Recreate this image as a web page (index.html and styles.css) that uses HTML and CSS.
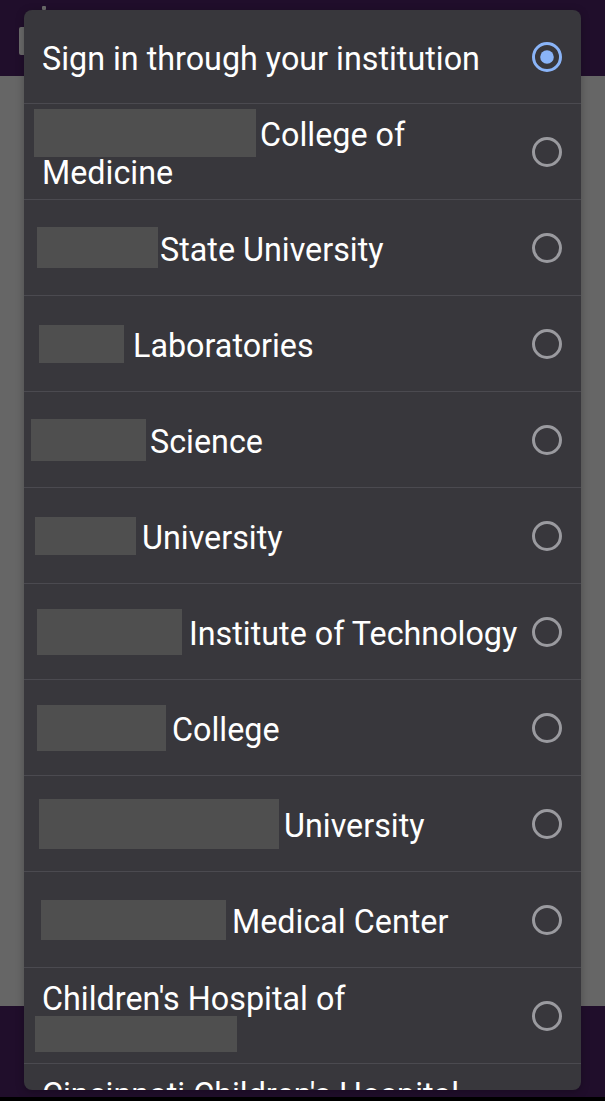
FILE: index.html
```html
<!DOCTYPE html>
<html lang="en">
<head>
<meta charset="utf-8">
<title>Sign in through your institution</title>
<link rel="stylesheet" href="styles.css">
</head>
<body>
<div class="page">
  <header class="topbar"></header>
  <main class="main"></main>
  <footer class="bottombar"></footer>
  <div class="strip"></div>

  <svg class="peek-icon" width="32" height="54" viewBox="0 0 32 54" aria-hidden="true">
    <rect x="2" y="22" width="10" height="28" rx="2" fill="#6a6a6a"/>
    <rect x="25" y="1" width="4" height="4" rx="1" fill="#6a6a6a"/>
  </svg>

  <div class="dialog" role="listbox">
    <div class="row first">
      <div class="label">Sign in through your institution</div>
      <svg class="radio" viewBox="0 0 30 30"><circle cx="15" cy="15" r="13.5" class="ring on"/><circle cx="15" cy="15" r="6.8" class="dot"/></svg>
    </div>
    <div class="row">
      <div class="label"><span class="redact r2"></span>College of<br>Medicine</div>
      <svg class="radio" viewBox="0 0 30 30"><circle cx="15" cy="15" r="13.5" class="ring"/></svg>
    </div>
    <div class="row">
      <div class="label"><span class="redact r3"></span>State University</div>
      <svg class="radio" viewBox="0 0 30 30"><circle cx="15" cy="15" r="13.5" class="ring"/></svg>
    </div>
    <div class="row">
      <div class="label"><span class="redact r4"></span>Laboratories</div>
      <svg class="radio" viewBox="0 0 30 30"><circle cx="15" cy="15" r="13.5" class="ring"/></svg>
    </div>
    <div class="row">
      <div class="label"><span class="redact r5"></span>Science</div>
      <svg class="radio" viewBox="0 0 30 30"><circle cx="15" cy="15" r="13.5" class="ring"/></svg>
    </div>
    <div class="row">
      <div class="label"><span class="redact r6"></span>University</div>
      <svg class="radio" viewBox="0 0 30 30"><circle cx="15" cy="15" r="13.5" class="ring"/></svg>
    </div>
    <div class="row">
      <div class="label"><span class="redact r7"></span>Institute of Technology</div>
      <svg class="radio" viewBox="0 0 30 30"><circle cx="15" cy="15" r="13.5" class="ring"/></svg>
    </div>
    <div class="row">
      <div class="label"><span class="redact r8"></span>College</div>
      <svg class="radio" viewBox="0 0 30 30"><circle cx="15" cy="15" r="13.5" class="ring"/></svg>
    </div>
    <div class="row">
      <div class="label"><span class="redact r9"></span>University</div>
      <svg class="radio" viewBox="0 0 30 30"><circle cx="15" cy="15" r="13.5" class="ring"/></svg>
    </div>
    <div class="row">
      <div class="label"><span class="redact r10"></span>Medical Center</div>
      <svg class="radio" viewBox="0 0 30 30"><circle cx="15" cy="15" r="13.5" class="ring"/></svg>
    </div>
    <div class="row">
      <div class="label">Children's Hospital of<br><span class="redact r11"></span></div>
      <svg class="radio" viewBox="0 0 30 30"><circle cx="15" cy="15" r="13.5" class="ring"/></svg>
    </div>
    <div class="row">
      <div class="label">Cincinnati Children's Hospital<br>Medical Center</div>
      <svg class="radio" viewBox="0 0 30 30"><circle cx="15" cy="15" r="13.5" class="ring"/></svg>
    </div>
  </div>
</div>
</body>
</html>
```

FILE: styles.css
```css
* { box-sizing: border-box; }

html, body {
  margin: 0;
  padding: 0;
  width: 605px;
  height: 1101px;
  overflow: hidden;
  background: #000;
}

.page {
  position: relative;
  width: 605px;
  height: 1101px;
  display: flex;
  flex-direction: column;
  font-family: Roboto, "Noto Sans", "Liberation Sans", sans-serif;
}

.topbar {
  height: 76px;
  background: #200e2b;
}

.main {
  height: 930px;
  background: #666666;
}

.bottombar {
  height: 91px;
  background: #200e2b;
}

.strip {
  flex: 1;
  background: #000;
}

.peek-icon {
  position: absolute;
  left: 17px;
  top: 5px;
}

.dialog {
  position: absolute;
  left: 24px;
  top: 10px;
  width: 557px;
  height: 1080px;
  background: #38373c;
  border-radius: 8px;
  overflow: hidden;
  box-shadow: 0 2px 8px rgba(0, 0, 0, 0.25);
}

.row {
  display: flex;
  align-items: center;
  height: 96px;
  padding: 0 19px 0 18px;
  border-top: 1px solid #4b4a50;
  flex-shrink: 0;
}

.row.first {
  height: 93px;
  border-top: none;
}

.label {
  flex: 1;
  min-width: 0;
  color: #ffffff;
  font-size: 32.3px;
  line-height: 38px;
  white-space: nowrap;
  padding-top: 4px;
}

.radio {
  width: 30px;
  height: 30px;
  flex-shrink: 0;
  margin-left: 6px;
}

.ring {
  fill: none;
  stroke: #9a9a9f;
  stroke-width: 3;
}

.ring.on {
  stroke: #8ab4f8;
}

.dot {
  fill: #8ab4f8;
}

.redact {
  display: inline-block;
  vertical-align: middle;
  background: #4f4f4f;
  margin-top: -10px;
  margin-bottom: -10px;
  transform: translateY(-4px);
}

.r2  { width: 222px; height: 48px; margin-left: -8px; margin-right: 4px; }
.r3  { width: 121px; height: 41px; margin-left: -5px; margin-right: 2px; }
.r4  { width: 85px;  height: 38px; margin-left: -3px; margin-right: 9px; }
.r5  { width: 115px; height: 42px; margin-left: -11px; margin-right: 4px; }
.r6  { width: 101px; height: 38px; margin-left: -7px; margin-right: 6px; }
.r7  { width: 145px; height: 46px; margin-left: -5px; margin-right: 7px; }
.r8  { width: 129px; height: 46px; margin-left: -5px; margin-right: 6px; }
.r9  { width: 240px; height: 50px; margin-left: -3px; margin-right: 5px; }
.r10 { width: 185px; height: 40px; margin-left: -1px; margin-right: 6px; }
.r11 { width: 202px; height: 36px; margin-left: -7px; transform: translateY(-5px); }
```
